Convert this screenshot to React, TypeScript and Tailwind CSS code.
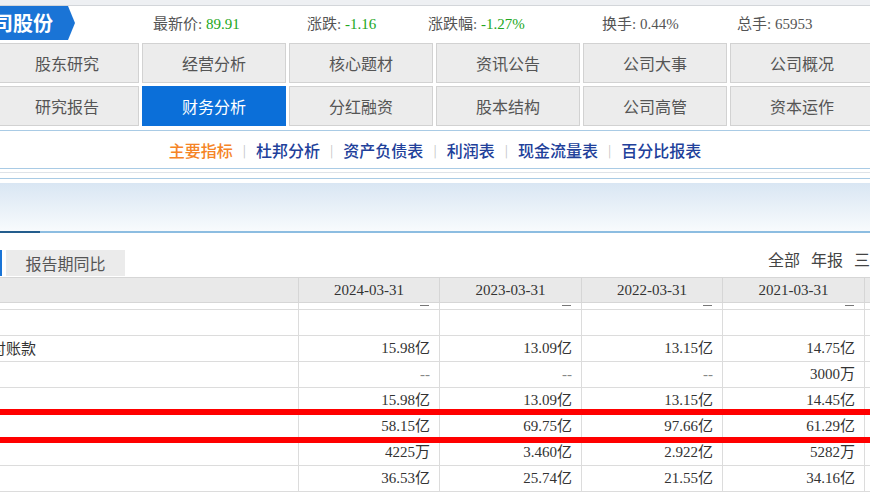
import React from "react";

const serif = "font-['Liberation_Serif','Noto_Sans_CJK_SC',serif]";
const sans = "font-['Noto_Sans_CJK_SC','Noto_Sans',sans-serif]";

const navRow1 = ["股东研究", "经营分析", "核心题材", "资讯公告", "公司大事", "公司概况"];
const navRow2 = ["研究报告", "财务分析", "分红融资", "股本结构", "公司高管", "资本运作"];

const subNav = ["主要指标", "杜邦分析", "资产负债表", "利润表", "现金流量表", "百分比报表"];

const colWidths = ["w-[141px]", "w-[142px]", "w-[141px]", "w-[142px]"];

const dates = ["2024-03-31", "2023-03-31", "2022-03-31", "2021-03-31"];

const rows: { label?: string; values: string[] }[] = [
  { values: ["", "", "", ""] },
  { label: "应付账款", values: ["15.98亿", "13.09亿", "13.15亿", "14.75亿"] },
  { values: ["--", "--", "--", "3000万"] },
  { values: ["15.98亿", "13.09亿", "13.15亿", "14.45亿"] },
  { values: ["58.15亿", "69.75亿", "97.66亿", "61.29亿"] },
  { values: ["4225万", "3.460亿", "2.922亿", "5282万"] },
  { values: ["36.53亿", "25.74亿", "21.55亿", "34.16亿"] },
];

function Stat({ label, value, green, w }: { label: string; value: string; green?: boolean; w: string }) {
  return (
    <div className={`${w} shrink-0 whitespace-nowrap text-[15px] text-[#555] ${serif}`}>
      {label}: <span className={green ? "text-[#22a722]" : "text-[#555]"}>{value}</span>
    </div>
  );
}

export default function App() {
  return (
    <div className={`w-[870px] h-[492px] overflow-hidden bg-white ${sans}`}>
      {/* top strip */}
      <div className="h-[6px] bg-[#eef0f3] border-b border-[#d3d6da]" />

      {/* header */}
      <div className="h-[37px] flex items-start">
        <div className="flex items-center shrink-0">
          <div className="relative h-[34px] w-[68px] bg-[#1a74d6] overflow-hidden">
            <span className={`absolute right-[15px] top-[5px] text-white text-[20px] font-bold whitespace-nowrap leading-[24px] ${sans}`}>
              司股份
            </span>
          </div>
          <div className="w-0 h-0 border-y-[17px] border-y-transparent border-l-[7px] border-l-[#1a74d6]" />
        </div>
        <div className="w-[78px] shrink-0" />
        <div className="flex items-center h-[37px]">
          <Stat label="最新价" value="89.91" green w="w-[154px]" />
          <Stat label="涨跌" value="-1.16" green w="w-[121px]" />
          <Stat label="涨跌幅" value="-1.27%" green w="w-[174px]" />
          <Stat label="换手" value="0.44%" w="w-[135px]" />
          <Stat label="总手" value="65953" w="w-[120px]" />
        </div>
      </div>

      {/* nav grid */}
      <div className="ml-[-5px] grid grid-cols-[repeat(6,144px)] grid-rows-[40px_40px] gap-[3px]">
        {[...navRow1, ...navRow2].map((t) => {
          const active = t === "财务分析";
          return (
            <div
              key={t}
              className={
                active
                  ? "flex items-center justify-center bg-[#0b6fd9] border border-[#0b6fd9] text-white text-[16px]"
                  : "flex items-center justify-center bg-[#ececec] border border-[#d2d2d2] text-[#555] text-[16px]"
              }
            >
              {t}
            </div>
          );
        })}
      </div>

      {/* sub nav */}
      <div className="mt-[4px] h-[38px] border-t border-[#a9cbe5] flex items-center justify-center">
        {subNav.map((t, i) => (
          <React.Fragment key={t}>
            {i > 0 && <span className="mx-[10px] text-[12px] text-[#c4c4c4]">|</span>}
            <span className={i === 0 ? "text-[16px] font-medium text-[#f58426]" : "text-[16px] font-medium text-[#21409a]"}>{t}</span>
          </React.Fragment>
        ))}
      </div>
      <div className="h-px bg-[#a9cbe5]" />
      <div className="h-[3px]" />
      <div className="h-px bg-[#dfe3e8]" />
      <div className="h-[5px]" />
      <div className="h-px bg-[#a9cbe5]" />
      <div className="h-[4px]" />
      <div className="h-[48px] bg-gradient-to-b from-[#d9e6f3] to-[#f8fbfd]" />
      <div className="h-[2px] flex">
        <div className="w-[40px] bg-[#235d8d]" />
        <div className="flex-1 bg-[#8cbde1]" />
      </div>

      {/* tabs */}
      <div className="mt-[17px] h-[26px] flex">
        <div className="w-[2px] bg-[#1a74d6]" />
        <div className="ml-[4px] w-[119px] bg-[#ebebeb] flex items-center justify-center text-[16px] text-[#555]">
          报告期同比
        </div>
        <div className="ml-[643px] w-[102px] shrink-0 overflow-hidden flex items-start gap-[11px] text-[16px] leading-[18px] text-[#444] whitespace-nowrap">
          <span>全部</span>
          <span>年报</span>
          <span>三季</span>
        </div>
      </div>

      {/* table */}
      <div className={`mt-[1px] relative ${serif}`}>
        <div className="h-[26px] flex bg-[#e9e9e9] border-t border-b border-[#d6d6d6]">
          <div className="w-[298px] shrink-0" />
          {dates.map((d, i) => (
            <div
              key={d}
              className={`${colWidths[i]} shrink-0 border-l border-[#d6d6d6] flex items-center justify-center text-[15px] text-[#333]`}
            >
              {d}
            </div>
          ))}
          <div className="flex-1 border-l border-[#d6d6d6]" />
        </div>
        {/* partially scrolled row */}
        <div className="h-[7px] flex border-b border-[#dcdcdc] overflow-hidden">
          <div className="w-[298px] shrink-0" />
          {[0, 1, 2, 3].map((i) => (
            <div key={i} className={`${colWidths[i]} shrink-0 border-l border-[#dcdcdc] overflow-hidden flex justify-end pr-[10px]`}>
              <div className="mt-[1px] w-[9px] h-[2px] border-b border-[#777]" />
            </div>
          ))}
          <div className="flex-1 border-l border-[#dcdcdc]" />
        </div>
        {rows.map((r, ri) => (
          <div key={ri} className="h-[26px] flex border-b border-[#dcdcdc]">
            <div className="w-[298px] shrink-0 overflow-hidden flex items-center">
              {r.label && (
                <span className={`ml-[-24px] whitespace-nowrap text-[15px] text-[#333] ${sans}`}>{r.label}</span>
              )}
            </div>
            {r.values.map((v, i) => (
              <div
                key={i}
                className={`${colWidths[i]} shrink-0 border-l border-[#dcdcdc] flex items-center justify-end pr-[9px] text-[15px] ${
                  v === "--" ? "text-[#888]" : "text-[#333]"
                }`}
              >
                {v}
              </div>
            ))}
            <div className="flex-1 border-l border-[#dcdcdc]" />
          </div>
        ))}
        {/* red annotation lines */}
        <div className="absolute left-0 right-0 top-[132px] h-[6px] bg-[#ff0000]" />
        <div className="absolute left-0 right-0 top-[160px] h-[6px] bg-[#ff0000]" />
      </div>
    </div>
  );
}
